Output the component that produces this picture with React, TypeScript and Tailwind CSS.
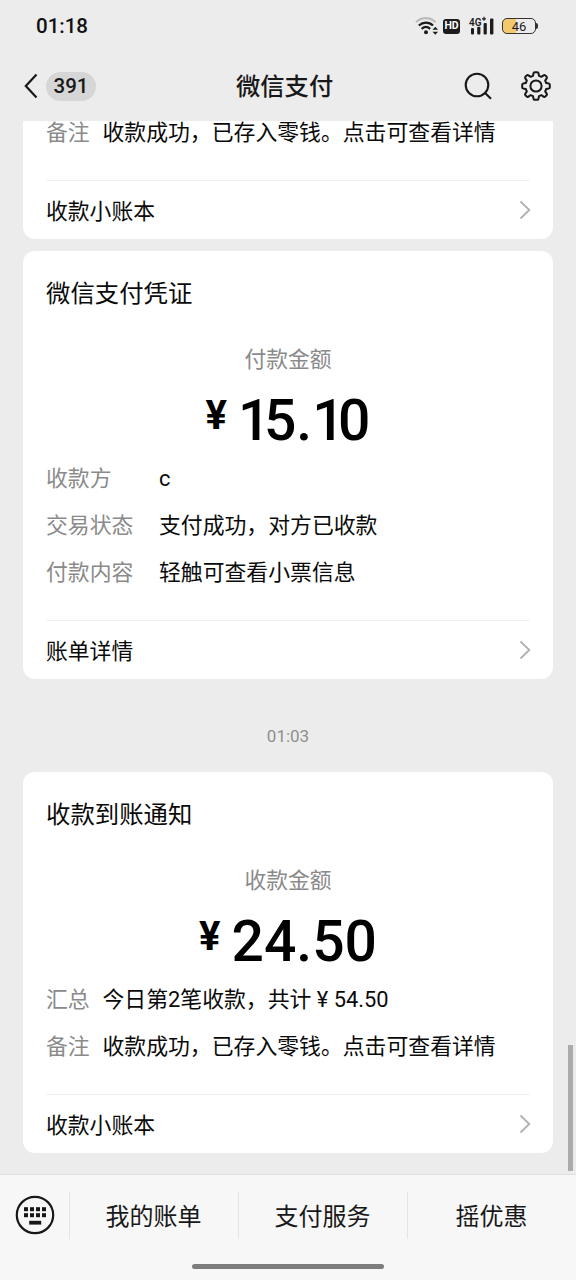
import React from 'react';

interface Row {
  label: string;
  value: string;
}

interface CardProps {
  title: string;
  caption: string;
  amount: string;
  rows: Row[];
  wide?: boolean;
  footer: string;
}

const Chevron: React.FC = () => (
  <svg className="-mr-px" width="12" height="20" viewBox="0 0 12 20" fill="none" stroke="#b2b2b2" strokeWidth="1.9">
    <path d="M1.5 1.5L10.3 10L1.5 18.5" />
  </svg>
);

const InfoRow: React.FC<Row & { wide?: boolean }> = ({ label, value, wide }) => (
  <div className="flex h-[47px] items-center text-[21.85px] leading-[47px] whitespace-nowrap">
    <span className={wide ? 'w-[113px] text-[#8a8a8a]' : 'w-[56.5px] text-[#8a8a8a]'}>{label}</span>
    <span className="text-[#0a0a0a]">{value}</span>
  </div>
);

const CardFooter: React.FC<{ text: string }> = ({ text }) => (
  <div className="mt-6 flex h-[59px] items-center justify-between border-t border-[#f0f0f0]">
    <span className="pt-[3px] text-[21.8px] leading-[55px] text-[#0a0a0a]">{text}</span>
    <Chevron />
  </div>
);

const Amount: React.FC<{ value: string }> = ({ value }) => (
  <div className="flex h-[71px] items-center justify-center pt-0.5 text-black">
    <span className="mr-[11px] -mt-[9px] text-[40px] leading-none font-bold">¥</span>
    <span className="flex text-[57px] leading-none font-medium">
      {value.split('').map((char, i) => (
        <span key={i} className={char === '1' ? 'tracking-[-6.5px]' : ''}>{char}</span>
      ))}
    </span>
  </div>
);

const PayCard: React.FC<CardProps> = ({ title, caption, amount, rows, wide, footer }) => (
  <div className="mx-[23px] rounded-xl bg-white px-[23px]">
    <h2 className="h-[82px] text-[24.4px] leading-[85px] text-[#0a0a0a]">{title}</h2>
    <p className="h-[51px] text-center text-[21.8px] leading-[53px] text-[#8a8a8a]">{caption}</p>
    <Amount value={amount} />
    {rows.map((row) => (
      <InfoRow key={row.label} {...row} wide={wide} />
    ))}
    <CardFooter text={footer} />
  </div>
);

const StatusBar: React.FC = () => (
  <div className="flex h-[52px] items-center justify-between pl-9 pr-[38px]">
    <span className="text-[20.5px] leading-none font-medium text-[#111]">01:18</span>
    <div className="flex items-center">
      {/* Wifi */}
      <svg width="24" height="20" viewBox="0 0 24 20" fill="none" strokeWidth="2.2">
        <path d="M1 6.2C6.5 .8 15 .8 20.5 6.2" stroke="#bdbdbd" />
        <path d="M3.8 9.5C8 5.6 14 5.6 18 9.5" stroke="#1c1c1c" />
        <path d="M6.6 12.8C9.2 10.6 12.6 10.6 15.2 12.8" stroke="#1c1c1c" />
        <circle cx="11" cy="16.2" r="2" fill="#1c1c1c" />
        <path d="M17.5 13.8L20.3 10.8L23.1 13.8ZM17.5 15.8L20.3 18.8L23.1 15.8Z" fill="#1c1c1c" />
      </svg>
      <span className="ml-[4px] flex h-[15px] w-[17px] items-center justify-center rounded-[3px] bg-[#1c1c1c] pt-px text-[10.5px] font-bold leading-none text-white">
        HD
      </span>
      {/* Signal bars */}
      <svg className="ml-[8px] overflow-visible" width="27" height="20" viewBox="0 0 27 20" fill="#1c1c1c">
        <text x="1" y="9.5" fontSize="11.5" fontWeight="600" textLength="12.5" lengthAdjust="spacingAndGlyphs">4G</text>
        <path d="M16 0.8V4.8M14 2.8H18" stroke="#1c1c1c" strokeWidth="1.2" />
        <rect x="3" y="12" width="3" height="6.5" rx="1" />
        <rect x="9.2" y="10.8" width="3.2" height="7.7" rx="1" />
        <rect x="15.6" y="7" width="3.2" height="11.5" rx="1" />
        <rect x="22" y="2.5" width="3.4" height="16" rx="1" />
      </svg>
      <div className="ml-[7px] flex h-[16.5px] w-[34px] items-center justify-center rounded-[5px] border-[1.5px] border-[#333] bg-[linear-gradient(90deg,#f4c86c_0_42%,transparent_42%)] text-[13px] leading-none text-[#1c1c1c]">
        46
      </div>
      <span className="h-1.5 w-0.5 rounded-r bg-[#333]" />
    </div>
  </div>
);

const NavBar: React.FC = () => (
  <div className="flex h-[68px] items-center pl-6 pr-[25px] text-[#181818]">
    <div className="flex w-[212px] items-center">
      <svg width="14" height="26" viewBox="0 0 14 26" fill="none" stroke="currentColor" strokeWidth="2.2">
        <path d="M12.5 1.5L1.8 13L12.5 24.5" />
      </svg>
      <span className="ml-2 flex h-[29px] w-[50px] items-center justify-center rounded-full bg-[#d6d6d6] pt-px text-[20.5px] leading-none font-medium">
        391
      </span>
    </div>
    <h1 className="pt-[3px] text-[24.3px] leading-none font-medium">微信支付</h1>
    <div className="flex flex-1 items-center justify-end gap-[29px]">
      <svg width="28" height="28" viewBox="0 0 28 28" fill="none" stroke="currentColor" strokeWidth="2.1">
        <circle cx="13" cy="13" r="11.3" />
        <path d="M20.8 20.8L27 26.8" />
      </svg>
      <svg width="30" height="30" viewBox="0 0 30 30" fill="none" stroke="currentColor" strokeWidth="2" strokeLinejoin="round">
        <circle cx="15" cy="15" r="5.6" />
        <path d="M13.6 1.2H16.4Q17.2 1.2 17.4 2L18 4.8L20.4 5.8L22.9 4.2Q23.6 3.8 24.2 4.4L25.6 5.8Q26.2 6.4 25.8 7.1L24.2 9.6L25.2 12L28 12.6Q28.8 12.8 28.8 13.6V16.4Q28.8 17.2 28 17.4L25.2 18L24.2 20.4L25.8 22.9Q26.2 23.6 25.6 24.2L24.2 25.6Q23.6 26.2 22.9 25.8L20.4 24.2L18 25.2L17.4 28Q17.2 28.8 16.4 28.8H13.6Q12.8 28.8 12.6 28L12 25.2L9.6 24.2L7.1 25.8Q6.4 26.2 5.8 25.6L4.4 24.2Q3.8 23.6 4.2 22.9L5.8 20.4L4.8 18L2 17.4Q1.2 17.2 1.2 16.4V13.6Q1.2 12.8 2 12.6L4.8 12L5.8 9.6L4.2 7.1Q3.8 6.4 4.4 5.8L5.8 4.4Q6.4 3.8 7.1 4.2L9.6 5.8L12 4.8L12.6 2Q12.8 1.2 13.6 1.2Z" />
      </svg>
    </div>
  </div>
);

const KeyboardIcon: React.FC = () => (
  <svg width="40" height="40" viewBox="0 0 40 40" fill="#181818">
    <circle cx="20" cy="20" r="18.2" fill="none" stroke="#181818" strokeWidth="2.2" />
    {[9, 15, 21, 27].map((x) => (
      <React.Fragment key={x}>
        <rect x={x} y="12.2" width="4" height="4" />
        <rect x={x} y="18.2" width="4" height="4" />
      </React.Fragment>
    ))}
    <rect x="14.2" y="25.8" width="12" height="3.8" />
  </svg>
);

const BottomBar: React.FC = () => (
  <div className="h-[106px] border-t border-[#dfdfdf] bg-[#f7f7f7]">
    <div className="flex h-[81px] items-center">
      <div className="flex w-[69px] justify-center pb-0.5">
        <KeyboardIcon />
      </div>
      {['我的账单', '支付服务', '摇优惠'].map((item) => (
        <div key={item} className="flex h-[47px] flex-1 items-center justify-center border-l border-[#e4e4e4] pt-0.5 pr-px text-[24px] leading-none text-[#181818]">
          {item}
        </div>
      ))}
    </div>
    <div className="mx-auto mt-2 h-[5px] w-48 rounded-full bg-[#7d7d7d]" />
  </div>
);

const App: React.FC = () => {
  return (
    <div className="relative flex h-[1280px] w-[576px] flex-col overflow-hidden bg-[#ececec] font-['Roboto','Noto_Sans_CJK_SC',sans-serif]">
      <header className="h-[121px] shrink-0">
        <StatusBar />
        <NavBar />
      </header>

      <main className="h-[1053px] shrink-0 overflow-hidden">
        {/* Card scrolled partly under the header */}
        <div className="mx-[23px] rounded-b-xl bg-white px-[23px]">
          <div className="-mt-3">
            <InfoRow label="备注" value="收款成功，已存入零钱。点击可查看详情" />
          </div>
          <CardFooter text="收款小账本" />
        </div>
        <div className="h-3" />
        <PayCard
          title="微信支付凭证"
          caption="付款金额"
          amount="15.10"
          wide
          rows={[
            { label: '收款方', value: 'c' },
            { label: '交易状态', value: '支付成功，对方已收款' },
            { label: '付款内容', value: '轻触可查看小票信息' },
          ]}
          footer="账单详情"
        />
        <p className="h-[93px] text-center text-[17px] leading-[114px] text-[#8f8f8f]">01:03</p>
        <PayCard
          title="收款到账通知"
          caption="收款金额"
          amount="24.50"
          rows={[
            { label: '汇总', value: '今日第2笔收款，共计 ¥ 54.50' },
            { label: '备注', value: '收款成功，已存入零钱。点击可查看详情' },
          ]}
          footer="收款小账本"
        />
      </main>

      <BottomBar />

      {/* Scroll indicator */}
      <div className="absolute top-[1045px] right-[3px] h-[126px] w-[5px] bg-[#ababab]" />
    </div>
  );
};

export default App;
